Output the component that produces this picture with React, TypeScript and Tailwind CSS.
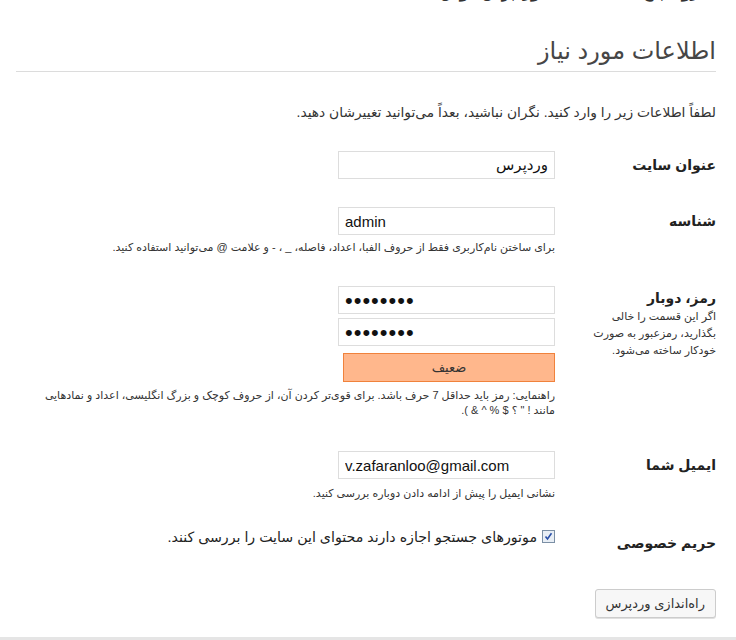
import { useState } from 'react';

const font = "font-['Liberation_Sans','DejaVu_Sans',sans-serif]";

function Checkbox({ checked, onToggle }: { checked: boolean; onToggle: () => void }) {
  return (
    <span
      onClick={onToggle}
      className="flex h-[13px] w-[13px] shrink-0 cursor-pointer items-center justify-center border border-[#7b8fa5] bg-[#e8eef5]"
    >
      {checked && (
        <svg width="9" height="9" viewBox="0 0 9 9">
          <path d="M1.5 4.5 L3.5 7 L7.5 1.2" fill="none" stroke="#2a4fa8" strokeWidth="1.6" />
        </svg>
      )}
    </span>
  );
}

export default function App() {
  const [allowSearch, setAllowSearch] = useState(true);

  return (
    <div dir="rtl" className={`min-h-[640px] bg-white text-[#333] ${font} flex flex-col`}>
      {/* cut off text at the very top */}
      <div className="h-[3px] overflow-hidden pr-5 pl-4">
        <p className="-mt-[15px] text-[14px] leading-[16px] font-bold text-[#333]">
          به روند پنج دقیقه‌ای نصب وردپرس خوش آمدید! فقط کافیست
        </p>
      </div>

      <div className="flex-1 pr-5 pl-4">
        {/* Header Section */}
        <h1 className="mt-[32px] text-[24px] leading-[32px] font-normal text-[#464646]">
          اطلاعات مورد نیاز
        </h1>
        <div className="mt-[4px] h-px bg-[#dcdcdc]" />

        <p className="mt-[31px] text-[13.8px] leading-[20px]">
          لطفاً اطلاعات زیر را وارد کنید. نگران نباشید، بعداً می‌توانید تغییرشان دهید.
        </p>

        {/* site title */}
        <div className="mt-[28px] flex">
          <div className="w-[161px] shrink-0 text-[14px] leading-[28px] font-bold text-[#222]">عنوان سایت</div>
          <div className="flex-1">
            <input
              defaultValue="وردپرس"
              className="h-[28px] w-[217px] border border-[#dddddd] px-[6px] text-[15px] text-[#111] outline-none"
            />
          </div>
        </div>

        {/* username */}
        <div className="mt-[28px] flex">
          <div className="w-[161px] shrink-0 text-[14px] leading-[28px] font-bold text-[#222]">شناسه</div>
          <div className="flex-1">
            <input
              dir="ltr"
              defaultValue="admin"
              className="h-[28px] w-[217px] border border-[#dddddd] px-[6px] text-[15px] text-[#111] outline-none"
            />
            <p className="mt-[4px] text-[11px] leading-[16px] text-[#333]">
              برای ساختن نام‌کاربری فقط از حروف الفبا، اعداد، فاصله، _ ، - و علامت @ می‌توانید استفاده کنید.
            </p>
          </div>
        </div>

        {/* password */}
        <div className="mt-[31px] flex">
          <div className="w-[161px] shrink-0 pt-[2px]">
            <div className="text-[14px] leading-[20px] font-bold text-[#222]">رمز، دوبار</div>
            <p className="text-[11px] leading-[17px] text-[#333]">
              اگر این قسمت را خالی
              <br />
              بگذارید، رمزعبور به صورت
              <br />
              خودکار ساخته می‌شود.
            </p>
          </div>
          <div className="flex-1">
            <input
              dir="ltr"
              type="password"
              defaultValue="12345678"
              className="block h-[28px] w-[217px] border border-[#dddddd] px-[6px] text-[22px] tracking-[1px] text-[#111] outline-none"
            />
            <input
              dir="ltr"
              type="password"
              defaultValue="12345678"
              className="mt-[4px] block h-[28px] w-[217px] border border-[#dddddd] px-[6px] text-[22px] tracking-[1px] text-[#111] outline-none"
            />
            <div className="mt-[7px] flex h-[29px] w-[212px] items-center justify-center border border-[#f0823c] bg-[#ffb78c] text-[13px] text-[#333]">
              ضعیف
            </div>
            <p className="mt-[6px] text-[11px] leading-[15px] text-[#333]">
              راهنمایی: رمز باید حداقل 7 حرف باشد. برای قوی‌تر کردن آن، از حروف کوچک و بزرگ انگلیسی، اعداد و نمادهایی
              <br />
              مانند ! " ؟ $ % ^ &amp; ).
            </p>
          </div>
        </div>

        {/* email */}
        <div className="mt-[33px] flex">
          <div className="w-[161px] shrink-0 text-[14px] leading-[28px] font-bold text-[#222]">ایمیل شما</div>
          <div className="flex-1">
            <input
              dir="ltr"
              defaultValue="v.zafaranloo@gmail.com"
              className="h-[28px] w-[217px] border border-[#dddddd] px-[6px] text-[15px] text-[#111] outline-none"
            />
            <p className="mt-[6px] text-[11px] leading-[16px] text-[#333]">
              نشانی ایمیل را پیش از ادامه دادن دوباره بررسی کنید.
            </p>
          </div>
        </div>

        {/* privacy */}
        <div className="mt-[27px] flex">
          <div className="w-[161px] shrink-0 pt-[5px] text-[14px] leading-[20px] font-bold text-[#222]">حریم خصوصی</div>
          <div className="flex flex-1 items-start gap-[5px] pt-[2px]">
            <Checkbox checked={allowSearch} onToggle={() => setAllowSearch(!allowSearch)} />
            <span className="-mt-[3px] text-[14.2px] leading-[20px] text-[#222]">
              موتورهای جستجو اجازه دارند محتوای این سایت را بررسی کنند.
            </span>
          </div>
        </div>

        <button className="mt-[36px] h-[29px] rounded-[3px] border border-[#cccccc] bg-[#f7f7f7] px-[10px] text-[13px] text-[#333] shadow-[0_1px_0_#e0e0e0]">
          راه‌اندازی وردپرس
        </button>
      </div>

      <div className="h-[3px] bg-[#e5e5e5]" />
    </div>
  );
}
